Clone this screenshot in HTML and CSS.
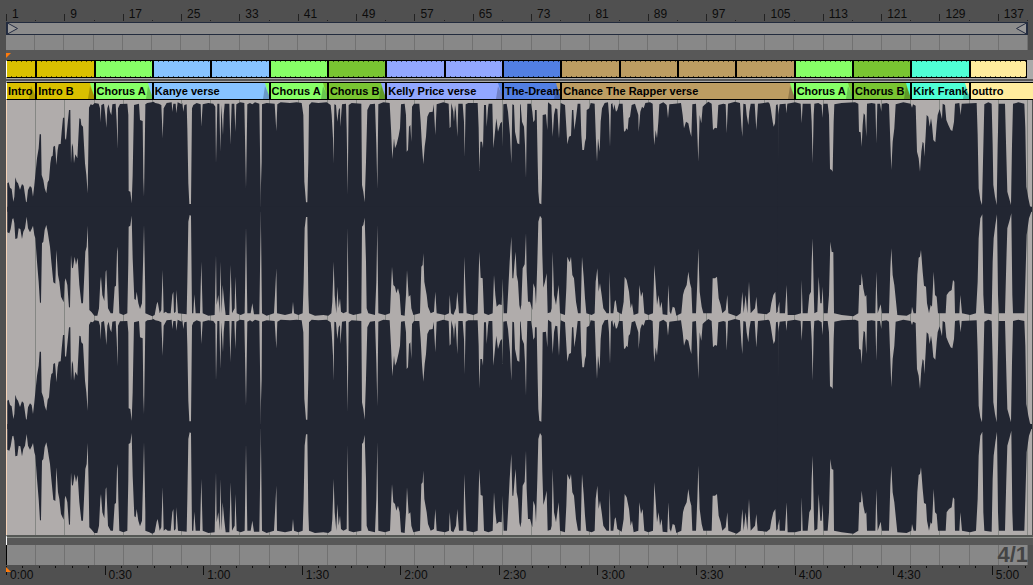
FILE: index.html
```html
<!DOCTYPE html>
<html lang="en">
<head>
<meta charset="utf-8">
<title>Arrangement</title>
<link rel="stylesheet" href="styles.css">
</head>
<body>
<main class="timeline">
  <div class="bars" id="bars"></div>
  <div class="loop">
    <svg class="loop-mark" viewBox="0 0 12 11"><path d="M0.5 0L10.5 5.5L0.5 11Z"/></svg>
    <svg class="loop-mark" viewBox="0 0 12 11"><path d="M11.5 0L1.5 5.5L11.5 11Z"/></svg>
  </div>
  <div class="strip strip-top"><div class="grid-lines"></div></div>
  <div class="gap"><svg class="marker" viewBox="0 0 5 5"><path d="M0 0H5L0 5Z"/></svg></div>
  <div class="sections" id="sections"></div>
  <div class="rail"></div>
  <div class="clips" id="clips"></div>
  <div class="wave">
    <div class="grid-lines"></div>
    <svg class="wave-shape" viewBox="21 15 3075 1305" preserveAspectRatio="none" role="img" aria-label="Stereo waveform">
      <defs>
        <g id="channel">
          <path d="M22 350 22,265 26,262 30,278 35,282 40,320 43,305 46,247 50,260 54,265 60,284 66,267 71,272 78,320 80,322 84,285 90,273 95,278 99,305 103,270 107,230 111,190 116,160 119,118 123,118 125,240 130,255 134,280 139,295 143,262 147,255 151,205 154,185 158,182 160,155 165,152 167,175 169,210 173,165 176,148 182,147 185,110 189,68 193,68 195,130 198,135 203,85 207,45 211,45 213,205 216,145 219,155 222,205 226,178 232,190 235,130 238,70 242,72 244,90 249,95 252,150 255,205 259,240 263,295 266,100 267,38 272,28 278,30 284,24 296,26 300,40 302,82 304,30 312,26 316,60 319,98 322,40 326,28 330,50 334,60 337,28 347,26 350,80 353,162 354,40 360,27 382,26 385,60 386,288 391,290 395,325 398,240 402,30 417,26 420,75 428,78 430,250 432,305 436,40 436,28 442,24 455,22 460,20 466,24 476,26 484,30 488,130 491,40 500,24 515,22 517,50 520,26 527,26 529,55 533,22 545,28 547,24 550,50 553,30 560,28 562,100 565,265 568,327 573,327 576,40 580,30 590,24 602,28 604,95 608,28 625,24 640,26 646,35 648,205 650,120 652,26 658,26 661,170 664,30 669,120 671,60 674,26 688,26 691,150 695,26 703,26 706,110 709,28 720,22 733,24 738,280 742,28 750,24 757,28 765,22 778,26 782,298V350Z"/>
          <path d="M22 335 22,412 28,415 32,402 37,372 40,370 43,385 46,432 52,430 56,400 61,402 66,432 70,410 75,400 80,365 84,400 90,412 96,400 99,392 103,420 106,430 111,500 116,560 120,625 123,622 126,445 130,440 134,405 139,390 143,410 146,430 150,455 154,500 160,562 166,566 169,465 174,540 178,560 183,605 191,622 194,560 197,550 202,570 207,638 210,636 213,480 216,520 219,518 224,485 228,510 233,488 238,570 244,625 249,625 252,560 256,470 260,455 263,392 266,520 268,645 275,652 283,662 292,662 297,640 301,560 303,545 307,600 313,618 317,530 319,525 324,640 332,655 339,655 344,575 348,572 351,470 353,455 355,560 358,655 370,660 382,655 385,500 386,395 391,392 395,362 398,490 403,612 407,615 410,590 415,625 420,642 426,625 430,470 432,390 436,600 436,655 448,660 457,664 464,660 470,628 473,620 479,655 484,645 488,525 491,655 497,650 503,655 512,655 517,600 520,590 522,655 527,650 529,585 534,655 560,658 562,560 565,380 569,360 573,362 576,655 580,655 583,598 587,655 600,655 604,500 608,655 625,662 644,660 648,480 650,630 655,600 659,655 661,500 665,655 668,570 673,625 677,660 688,660 692,510 696,655 704,640 706,545 710,655 722,660 734,655 738,395 742,655 752,655 757,625 762,658 778,658 782,398V335Z"/>
          <g transform="translate(780 0)">
            <path d="M0 350 2,298 5,200 6,28 20,24 44,26 49,108 52,28 62,22 90,24 110,22 125,24 130,60 133,260 138,322 142,322 145,200 147,30 155,22 175,24 200,22 212,30 215,60 219,130 221,205 223,28 228,30 232,80 236,45 240,38 241,95 246,28 258,26 260,100 263,298 266,30 275,24 304,26 306,270 310,290 314,322 318,200 322,45 330,28 345,26 349,150 352,282 355,28 370,22 389,24 393,100 397,192 402,130 405,160 410,148 416,122 420,100 423,28 434,26 438,60 440,170 444,165 447,95 451,90 454,140 456,35 462,26 478,26 482,80 486,155 490,208 494,155 498,125 502,65 508,52 518,50 521,28 526,120 530,28 550,22 566,26 569,100 572,95 574,24 580,50 582,80 585,30 588,50 592,125 595,26 608,26 612,80 614,185 617,28 625,24 653,24 656,100 658,228 661,140 666,140 669,160 672,30 678,30 680,95 684,40 686,26 697,26 700,160 704,120 709,70 714,110 721,85 726,80 728,155 730,28 740,26 744,50 750,120 754,205 757,28 762,30 765,110 772,145 778,148 781,26V350Z"/>
            <path d="M0 335 3,400 6,655 20,662 42,655 45,600 49,520 51,655 75,660 96,655 99,620 102,655 115,660 128,655 131,560 134,400 138,366 142,366 145,600 147,655 165,662 190,660 205,662 214,655 217,620 221,500 224,600 229,655 232,575 236,640 240,610 243,650 250,655 260,650 263,398 266,655 280,660 304,655 306,395 310,390 314,368 318,500 320,640 325,655 345,660 349,560 352,390 355,655 375,660 390,655 394,560 396,515 400,570 405,575 409,595 414,580 419,600 423,660 434,662 438,600 441,525 446,605 451,600 454,640 460,660 480,655 484,515 488,510 490,475 493,560 500,600 504,635 512,655 522,650 526,590 530,655 555,660 567,655 569,600 573,655 580,660 588,640 592,590 597,655 610,655 613,485 617,600 620,655 640,660 653,655 656,540 658,470 662,548 668,550 672,655 685,660 698,655 702,540 706,600 710,635 717,628 725,630 728,550 731,655 741,655 745,580 749,500 754,425 757,550 760,550 764,500 767,470 770,540 774,560 778,630 781,645V335Z"/>
          </g>
          <g transform="translate(1560 0)">
            <path d="M0 350 0,26 2,30 6,80 12,95 15,150 18,250 20,100 22,26 33,26 37,50 40,82 44,75 45,45 50,45 53,200 55,290 58,325 64,328 66,250 68,60 78,58 82,105 84,22 94,30 98,125 102,60 106,40 112,42 117,130 120,60 122,24 135,30 138,80 142,148 147,125 153,122 156,45 160,45 163,105 168,70 173,26 181,26 184,120 187,165 192,165 195,140 198,130 200,45 208,40 212,24 224,26 228,140 231,200 234,130 239,170 242,80 246,40 254,24 264,22 267,60 270,155 273,28 277,24 280,45 283,28 288,50 292,45 297,26 308,26 312,110 316,108 319,100 323,105 326,70 330,65 335,30 345,26 355,60 356,110 361,50 366,35 371,40 376,24 390,22 398,26 401,120 403,150 407,105 411,130 415,80 418,28 430,22 440,30 444,70 448,28 465,26 483,24 488,60 492,100 498,80 505,85 510,110 514,125 517,28 528,26 531,90 535,200 539,60 544,85 548,35 553,30 565,20 575,26 579,105 585,98 591,100 595,30 610,26 617,28 620,115 624,26 645,20 660,24 664,90 667,125 670,26 677,28 680,60 685,90 688,50 692,26 704,26 709,105 714,26 745,22 749,26 752,40 758,80 761,95 765,85 768,30 773,28 776,60V350Z"/>
            <path d="M0 335 0,645 4,630 8,520 14,508 18,415 20,530 24,620 30,620 37,645 40,565 45,580 48,630 52,500 55,380 60,362 65,370 67,480 70,578 75,560 80,535 83,655 92,652 95,640 98,470 102,600 108,630 116,570 120,655 135,660 139,580 142,485 149,502 153,485 157,540 162,550 168,620 174,655 182,655 186,485 191,545 195,610 199,655 215,660 224,655 227,560 232,520 236,590 240,565 245,600 250,640 260,655 267,655 269,530 272,655 280,655 284,620 287,615 292,650 305,658 311,620 314,545 320,555 327,590 332,640 336,625 341,660 355,655 358,570 363,605 368,590 373,655 385,660 399,655 403,510 408,580 411,630 416,600 420,640 425,620 428,658 442,660 445,570 449,650 453,658 458,635 464,638 469,662 484,655 489,600 493,585 500,570 505,530 510,565 514,580 517,655 528,655 532,560 535,460 539,590 545,635 550,655 575,655 578,550 585,550 591,545 596,610 602,630 607,655 617,645 622,600 625,655 650,664 662,655 667,590 671,655 677,600 682,655 687,560 692,655 705,640 709,605 713,655 740,658 750,650 754,625 760,600 766,590 769,655 773,650 776,605V335Z"/>
          </g>
          <g transform="translate(2325 0)">
            <path d="M8 350 10,60 14,28 32,26 34,55 37,26 60,22 77,26 80,85 83,26 107,26 110,80 113,205 116,60 118,26 130,24 140,30 142,68 145,26 158,26 162,60 165,222 170,225 173,230 176,80 178,28 200,24 240,22 250,26 252,110 257,112 260,155 263,90 266,55 270,60 274,125 276,26 290,24 301,26 304,145 307,26 315,26 319,50 321,26 335,24 342,28 346,140 349,225 353,140 358,100 362,28 385,22 407,26 411,38 414,28 422,32 426,170 431,190 435,230 439,170 443,140 446,145 448,185 452,120 455,60 460,65 464,95 468,70 471,90 475,135 481,142 485,90 488,60 494,42 501,72 503,26 510,30 514,75 520,90 527,105 532,108 537,80 540,26 553,24 557,60 560,26 605,24 608,120 611,280 616,315 621,330 624,200 628,28 640,22 650,26 653,150 655,270 660,305 665,330 668,150 671,26 690,26 694,180 697,290 703,312 708,330 711,150 714,26 730,22 748,26 751,100 754,275 760,310 765,333 771,342V350Z"/>
            <path d="M8 335 9,640 13,620 14,655 30,655 35,570 38,660 60,660 78,655 80,555 83,655 98,655 103,600 108,590 110,500 113,430 116,580 118,655 127,650 131,545 136,625 140,625 143,575 146,655 158,655 162,600 166,440 170,470 175,472 177,655 200,660 235,664 250,655 253,570 258,570 260,535 265,580 270,605 274,600 276,655 301,655 304,530 308,655 317,628 321,655 342,655 346,520 349,460 353,540 358,570 362,610 367,660 395,662 409,655 411,635 416,655 423,655 427,540 431,488 435,485 438,465 443,530 447,572 453,575 456,625 462,655 467,630 471,635 476,530 480,600 485,605 489,655 512,655 515,600 522,590 530,585 534,555 538,560 540,655 553,655 556,600 561,655 585,660 603,655 608,560 611,430 616,370 622,358 625,600 628,655 650,658 653,500 656,430 661,390 666,358 669,600 672,655 690,655 694,500 697,400 704,375 709,355 712,600 714,655 748,655 751,560 755,420 762,370 771,345V335Z"/>
          </g>
        </g>
      </defs>
      <use href="#channel"/>
      <use href="#channel" transform="translate(0 652)"/>
    </svg>
  </div>
  <div class="gap-bottom"></div>
  <div class="strip strip-bottom"><div class="grid-lines"></div><span class="signature">4/1</span></div>
  <div class="times" id="times"><svg class="marker marker-low" viewBox="0 0 5 5"><path d="M0 0L5 5H0Z"/></svg></div>
</main>
<script src="app.js"></script>
</body>
</html>
```
FILE: styles.css
```css
* { box-sizing: border-box; }

body {
  margin: 0;
  background: #505050;
  color: #0c0c0c;
  font: 12px/14px "Liberation Sans", Arial, sans-serif;
}

.timeline {
  display: flex;
  flex-direction: column;
  min-height: 100vh;
  padding: 0 0 0 6px;
  overflow: hidden;
}

.bars {
  display: grid;
  grid-template-columns: repeat(35, 1fr);
  align-items: end;
  height: 21px;
  margin-bottom: 1px;
  padding-right: 6px;
}
.bar-label {
  grid-column: span 2;
  position: relative;
  height: 14px;
  padding-left: 6px;
  white-space: nowrap;
}
.bar-label:last-child { grid-column: span 1; }
.bar-label::before, .bar-label::after {
  content: "";
  position: absolute;
  left: 0;
  top: 7px;
  width: 1px;
  height: 7px;
  background: #222;
}
.bar-label::after { left: 50%; top: 13px; height: 1px; }
.bar-label:last-child::after { left: 100%; }

.loop {
  display: flex;
  justify-content: space-between;
  height: 13px;
  margin-right: 5px;
  border: 1px solid #222b3d;
  background: #8c8c8c;
}
.loop-mark { width: 12px; height: 11px; }
.loop-mark path { fill: #999; stroke: #252d42; stroke-width: 1; }

.strip {
  display: flex;
  position: relative;
  background: #888;
}
.strip-top { height: 15px; margin-right: 5px; }
.strip-bottom {
  height: 20px;
  justify-content: flex-end;
  align-items: center;
  margin-right: 5px;
  border-left: 1px solid #000;
}
.signature {
  position: relative;
  color: #444;
  font-size: 22px;
  font-weight: bold;
  line-height: 20px;
}

.grid-lines {
  position: absolute;
  inset: 0;
  display: grid;
  grid-template-columns: repeat(35, 1fr);
}
.grid-lines span { border-right: 1px solid #717171; }

.gap { height: 10px; padding-top: 3px; background: #585858; }
.marker { display: block; width: 5px; height: 5px; }
.marker path { fill: #ff7a0a; }

.sections, .clips {
  display: grid;
  grid-template-columns: repeat(35, 1fr);
  padding-right: 6px;
  background: #aaa;
}
.sections { height: 18px; }
.section {
  border: 1px solid #000;
  border-left-width: 2px;
  border-right-width: 0;
  background-image:
    repeating-linear-gradient(90deg, transparent 0 4px, rgba(0, 0, 0, .6) 4px 5px),
    repeating-linear-gradient(90deg, transparent 0 4px, rgba(0, 0, 0, .6) 4px 5px);
  background-size: 100% 1px;
  background-position: top, bottom;
  background-repeat: no-repeat;
}
.section:last-child { border-right-width: 1px; }
.section:first-child, .clip:first-child { border-left: 1px solid #fff; }

.rail { height: 4px; border: solid #aaa; border-width: 1px 0; background: #585858; }

.clips {
  grid-template-columns: repeat(35, 1fr) 6px;
  height: 18px;
  padding-right: 0;
}
.clip {
  position: relative;
  min-width: 0;
  overflow: hidden;
  padding: 0 0 0 1px;
  border: 1px solid #000;
  border-left-width: 2px;
  border-right-width: 0;
  border-radius: 0;
  color: #000;
  font: bold 11px/16px "Liberation Sans", Arial, sans-serif;
  text-align: left;
  white-space: nowrap;
}
.clip-label { position: relative; }
.clip-end { position: absolute; right: 0; top: 0; width: 6px; height: 16px; }
.clip-end .fold { fill: #000; fill-opacity: .22; }

.wave {
  position: relative;
  display: flex;
  flex: 1;
  margin-right: 1px;
  border-left: 1px solid #f5d3b8;
  background: #b0acab;
}
.wave .grid-lines { right: 4px; }
.wave .grid-lines span { border-color: #858784; }
.wave-shape { position: absolute; inset: 0; width: 100%; height: 100%; }
.wave-shape path { fill: #222632; }

.gap-bottom {
  height: 10px;
  border-top: 2px solid #555855;
  border-left: 1px solid #fff;
  background: linear-gradient(#8d908c 1px, #585858 1px);
}

.times {
  position: relative;
  display: grid;
  grid-template-columns: repeat(11, 9.6%);
  height: 20px;
  padding-top: 1px;
  overflow: hidden;
}
.marker-low { position: absolute; left: 0; top: 2px; z-index: 1; }
.time {
  display: grid;
  grid-template-columns: repeat(6, 1fr);
  grid-template-rows: 2px 17px;
}
.time i { border-left: 1px solid #111; }
.time span {
  grid-column: 1 / -1;
  position: relative;
  padding-left: 4px;
  white-space: nowrap;
}
.time span::before {
  content: "";
  position: absolute;
  left: 0;
  top: 0;
  height: 7px;
  border-left: 1px solid #111;
}
```
FILE: app.js
```js
const UNITS = 35; // four-bar columns

document.querySelectorAll('.grid-lines').forEach(el => {
  for (let i = 0; i < UNITS; i++) el.append(document.createElement('span'));
});

const bars = document.getElementById('bars');
for (let n = 1; n <= 137; n += 8) {
  const el = document.createElement('span');
  el.className = 'bar-label';
  el.textContent = n;
  bars.append(el);
}

// label, colour, width in columns
const clips = [
  ['Intro', '#d9c000', 1], ['Intro B', '#d9c000', 2], ['Chorus A', '#87ff67', 2],
  ['Kanye verse', '#87c3ff', 4], ['Chorus A', '#87ff67', 2], ['Chorus B', '#79c532', 2],
  ['Kelly Price verse', '#92a7ff', 4], ['The-Dream', '#527fe3', 2],
  ['Chance The Rapper verse', '#bd9d62', 8], ['Chorus A', '#87ff67', 2],
  ['Chorus B', '#79c532', 2], ['Kirk Frank', '#4fffd5', 2], ['outtro', '#ffec9e', 2]
];
const sectionRow = document.getElementById('sections');
const clipRow = document.getElementById('clips');
clips.forEach(([label, colour, span], i) => {
  for (let left = span; left > 0; left -= 2) {
    const s = document.createElement('div');
    s.className = 'section';
    s.style.backgroundColor = colour;
    s.style.gridColumn = `span ${Math.min(2, left)}`;
    sectionRow.append(s);
  }
  const b = document.createElement('button');
  const next = clips[i + 1];
  b.type = 'button';
  b.className = 'clip';
  b.style.backgroundColor = colour;
  b.style.gridColumn = `span ${next ? span : span + 1}`;
  if (next) {
    b.innerHTML = `<svg class="clip-end" viewBox="0 0 6 16"><path d="M2 0H6V13Z" fill="${next[1]}"/><path class="fold" d="M2 3L6 12V16H0Z"/></svg>`;
  }
  const t = document.createElement('span');
  t.className = 'clip-label';
  t.textContent = label;
  b.append(t);
  clipRow.append(b);
});

const times = document.getElementById('times');
for (let s = 0; s <= 300; s += 30) {
  const el = document.createElement('div');
  el.className = 'time';
  el.innerHTML = '<i></i>'.repeat(6) + `<span>${Math.floor(s / 60)}:${String(s % 60).padStart(2, '0')}</span>`;
  times.append(el);
}
```
